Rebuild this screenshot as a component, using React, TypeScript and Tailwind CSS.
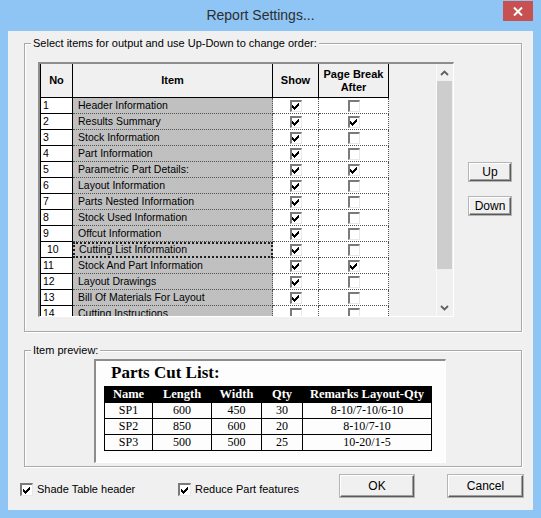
import React from 'react';

/** One entry of the report item list. */
interface ReportRow {
  no: string;
  item: string;
  show: boolean;
  pageBreak: boolean;
}

const ROWS: ReportRow[] = [
  { no: '1', item: 'Header Information', show: true, pageBreak: false },
  { no: '2', item: 'Results Summary', show: true, pageBreak: true },
  { no: '3', item: 'Stock Information', show: true, pageBreak: false },
  { no: '4', item: 'Part Information', show: true, pageBreak: false },
  { no: '5', item: 'Parametric Part Details:', show: true, pageBreak: true },
  { no: '6', item: 'Layout Information', show: true, pageBreak: false },
  { no: '7', item: 'Parts Nested Information', show: true, pageBreak: false },
  { no: '8', item: 'Stock Used Information', show: true, pageBreak: false },
  { no: '9', item: 'Offcut Information', show: true, pageBreak: false },
  { no: '10', item: 'Cutting List Information', show: true, pageBreak: false },
  { no: '11', item: 'Stock And Part Information', show: true, pageBreak: true },
  { no: '12', item: 'Layout Drawings', show: true, pageBreak: false },
  { no: '13', item: 'Bill Of Materials For Layout', show: true, pageBreak: false },
  { no: '14', item: 'Cutting Instructions', show: false, pageBreak: false },
];

const PARTS = [
  ['SP1', '600', '450', '30', '8-10/7-10/6-10'],
  ['SP2', '850', '600', '20', '8-10/7-10'],
  ['SP3', '500', '500', '25', '10-20/1-5'],
];

const SELECTED = '10';

/** Classic sunken check box, drawn with borders and an svg tick. */
function ClassicCheck({ checked, size = 12 }: { checked: boolean; size?: number }) {
  return (
    <span
      className="flex shrink-0 items-center justify-center border-t-2 border-l-2 border-b border-r border-t-[#7a7a7a] border-l-[#7a7a7a] border-b-[#e8e8e8] border-r-[#e8e8e8] bg-white"
      style={{ width: size, height: size }}
    >
      {checked && (
        <svg width="8" height="7" viewBox="0 0 8 7" shapeRendering="crispEdges">
          <path d="M0 2h1v1h1v1h1v-1h1v-1h1v-1h1v-1h1v3h-1v1h-1v1h-1v1h-1v1h-1v-1h-1v-1h-1z" fill="#000" />
        </svg>
      )}
    </span>
  );
}

function Chevron({ up }: { up: boolean }) {
  return (
    <svg width="9" height="6" viewBox="0 0 9 6">
      <path d={up ? 'M1 5 L4.5 1.5 L8 5' : 'M1 1 L4.5 4.5 L8 1'} fill="none" stroke="#606060" strokeWidth="1.8" />
    </svg>
  );
}

/** Group box with its caption laid over the top line. */
function GroupBox({ label, className, children }: { label: string; className: string; children: React.ReactNode }) {
  return (
    <div className={`relative border border-[#a9a9a9] shadow-[inset_1px_1px_0_#fff,1px_1px_0_#fff] ${className}`}>
      <span className="absolute left-[6px] top-[-8px] bg-[#f0f0f0] px-[2px] text-[11px] leading-[14px] text-black">{label}</span>
      {children}
    </div>
  );
}

function WinButton({ label, className }: { label: string; className: string }) {
  return (
    <button
      className={`flex items-center justify-center border border-t-white border-l-white border-b-[#5a5a5a] border-r-[#5a5a5a] bg-[#f0f0f0] text-[12px] text-black shadow-[inset_-1px_-1px_0_#a0a0a0,0_0_0_1px_#b5b5b5] ${className}`}
    >
      {label}
    </button>
  );
}

function ItemGrid() {
  return (
    <div className="flex h-[255px] w-[416px] shrink-0 overflow-hidden border-t-2 border-l-2 border-b border-r border-t-[#8d8d8d] border-l-[#8d8d8d] border-b-white border-r-white text-[10.5px] text-black">
      <div className="flex w-[349px] flex-col">
        {/* header */}
        <div className="flex h-[34px] shrink-0 border-b border-black bg-[#f0f0f0] text-center text-[11px] font-bold leading-[13px]">
          <div className="flex w-[33px] items-center justify-center border-x border-black">No</div>
          <div className="flex w-[200px] items-center justify-center border-r border-black">Item</div>
          <div className="flex w-[46px] items-center justify-center border-r border-black">Show</div>
          <div className="flex w-[70px] items-center justify-center border-r border-black">
            Page Break
            <br />
            After
          </div>
        </div>
        {ROWS.map((r) => (
          <div key={r.no} className="flex h-[16px] shrink-0 leading-[15px]">
            <div
              className={`w-[33px] border-x border-b border-black bg-white ${r.no === SELECTED ? 'pl-[6px]' : 'pl-[2px]'}`}
            >
              {r.no}
            </div>
            {r.no === SELECTED ? (
              <div className="w-[200px] border-2 border-dotted border-[#202020] bg-[#c0c0c0] pl-[4px] leading-[11px]">{r.item}</div>
            ) : (
              <div className="w-[200px] border-r border-b border-dotted border-[#505050] bg-[#c0c0c0] pl-[5px]">{r.item}</div>
            )}
            <div className="flex w-[46px] items-center justify-center border-r border-b border-dotted border-[#505050] bg-white">
              <ClassicCheck checked={r.show} />
            </div>
            <div className="flex w-[70px] items-center justify-center border-r border-b border-dotted border-[#505050] bg-white">
              <ClassicCheck checked={r.pageBreak} />
            </div>
          </div>
        ))}
      </div>
      <div className="w-[48px] bg-[#f0f0f0]" />
      {/* vertical scroll bar */}
      <div className="flex w-[17px] flex-col bg-[#f0f0f0] shadow-[inset_1px_0_0_#fafafa]">
        <div className="flex h-[17px] items-center justify-center">
          <Chevron up />
        </div>
        <div className="mx-[1px] h-[188px] bg-[#cdcdcd]" />
        <div className="flex-1" />
        <div className="flex h-[17px] items-center justify-center">
          <Chevron up={false} />
        </div>
      </div>
    </div>
  );
}

function Preview() {
  return (
    <div className="h-[104px] w-[352px] border-t-2 border-l-2 border-b border-r border-t-[#8d8d8d] border-l-[#8d8d8d] border-b-white border-r-white bg-[#fdfdfd] text-black [font-family:'Liberation_Serif',serif]">
      <div className="pl-[15px] pt-[1px] text-[17px] font-bold leading-[22px]">Parts Cut List:</div>
      <table className="ml-[8px] mt-[2px] table-fixed border-collapse text-center text-[12px] leading-[15px]">
        <colgroup>
          <col className="w-[48px]" />
          <col className="w-[59px]" />
          <col className="w-[50px]" />
          <col className="w-[41px]" />
          <col className="w-[129px]" />
        </colgroup>
        <thead>
          <tr className="bg-black text-[12.5px] font-bold text-white">
            <th className="border border-black">Name</th>
            <th className="border border-black">Length</th>
            <th className="border border-black">Width</th>
            <th className="border border-black">Qty</th>
            <th className="border border-black">Remarks Layout-Qty</th>
          </tr>
        </thead>
        <tbody>
          {PARTS.map((p) => (
            <tr key={p[0]}>
              {p.map((c, i) => (
                <td key={i} className="border border-black">
                  {c}
                </td>
              ))}
            </tr>
          ))}
        </tbody>
      </table>
    </div>
  );
}

export default function App() {
  return (
    <div className="relative flex h-[518px] w-[541px] flex-col bg-[#8ec5f5] [font-family:'Liberation_Sans',Arial,sans-serif]">
      {/* title bar */}
      <div className="flex h-[31px] shrink-0 items-center justify-center pr-[20px] text-[14px] text-[#2e2e2e]">
        Report Settings...
      </div>
      <button className="absolute right-[8px] top-[1px] flex h-[20px] w-[30px] items-center justify-center bg-[#c75050]">
        <svg width="10" height="9" viewBox="0 0 10 9">
          <path d="M1 0.5 L9 8.5 M9 0.5 L1 8.5" stroke="#fff" strokeWidth="2" />
        </svg>
      </button>

      {/* dialog body */}
      <div className="mx-[8px] flex h-[479px] flex-col bg-[#f0f0f0] pt-[12px]">
        <GroupBox label="Select items for output and use Up-Down to change order:" className="ml-[16px] mr-[11px] h-[289px]">
          <div className="flex pl-[13px] pt-[18px]">
            <ItemGrid />
            <div className="ml-[15px] flex flex-col gap-[16px] pt-[101px]">
              <WinButton label="Up" className="h-[18px] w-[42px]" />
              <WinButton label="Down" className="h-[18px] w-[42px]" />
            </div>
          </div>
        </GroupBox>

        <GroupBox label="Item preview:" className="ml-[16px] mr-[11px] mt-[18px] h-[117px]">
          <div className="pl-[69px] pt-[8px]">
            <Preview />
          </div>
        </GroupBox>

        <div className="mt-[8px] flex items-start pl-[12px] text-[11px] text-black">
          <label className="mt-[8px] flex w-[158px] items-center gap-[4px] leading-[13px]">
            <ClassicCheck checked size={13} />
            Shade Table header
          </label>
          <label className="mt-[8px] flex w-[162px] items-center gap-[4px] leading-[13px]">
            <ClassicCheck checked size={13} />
            Reduce Part features
          </label>
          <WinButton label="OK" className="h-[22px] w-[74px]" />
          <WinButton label="Cancel" className="ml-[34px] h-[22px] w-[75px]" />
        </div>
      </div>
    </div>
  );
}
